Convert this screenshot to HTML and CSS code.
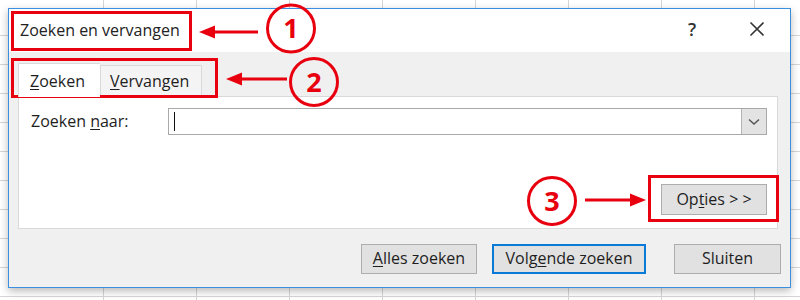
FILE: index.html
```html
<!DOCTYPE html>
<html lang="nl">
<head>
<meta charset="utf-8">
<title>Zoeken en vervangen</title>
<link rel="stylesheet" href="styles.css">
</head>
<body>
<div class="dialog">
  <div class="titlebar">
    <span class="title">Zoeken en vervangen</span>
    <span class="help">?</span>
    <span class="close">
      <svg width="16" height="16" viewBox="0 0 16 16"><path d="M1.5 1.5 L14.5 14.5 M14.5 1.5 L1.5 14.5" stroke="#333" stroke-width="1.6" fill="none"/></svg>
    </span>
  </div>
  <div class="tabs">
    <div class="tab active"><u>Z</u>oeken</div>
    <div class="tab"><u>V</u>ervangen</div>
  </div>
  <div class="panel">
    <div class="field-row">
      <label class="label">Zoeken <u>n</u>aar:</label>
      <div class="combo">
        <div class="combo-input"><span class="caret"></span></div>
        <div class="combo-btn">
          <svg width="12" height="8" viewBox="0 0 12 8"><path d="M1 1.5 L6 6 L11 1.5" stroke="#555" stroke-width="1.5" fill="none"/></svg>
        </div>
      </div>
    </div>
    <div class="options-row">
      <button class="btn options">Op<u>t</u>ies &gt; &gt;</button>
    </div>
  </div>
  <div class="footer">
    <button class="btn b-all"><u>A</u>lles zoeken</button>
    <button class="btn b-next default">Volg<u>e</u>nde zoeken</button>
    <button class="btn b-close">Sluiten</button>
  </div>
</div>

<svg class="annotations" width="800" height="300" viewBox="0 0 800 300">
  <g fill="none" stroke="#e8000e" stroke-width="3">
    <rect x="12.5" y="12.5" width="178" height="37"/>
    <rect x="12.5" y="59.5" width="204" height="37"/>
    <rect x="649.5" y="176.5" width="128" height="44"/>
    <circle cx="291" cy="28.5" r="23.5"/>
    <circle cx="314" cy="82" r="23.5"/>
    <circle cx="552" cy="201" r="23.5"/>
    <line x1="258" y1="32" x2="212" y2="32"/>
    <line x1="287" y1="79" x2="239" y2="79"/>
    <line x1="585" y1="200" x2="633" y2="200"/>
  </g>
  <g fill="#e8000e">
    <polygon points="199,32 215,25.5 215,38.5"/>
    <polygon points="226,79 242,72.5 242,85.5"/>
    <polygon points="646,200 630,193.5 630,206.5"/>
  </g>
  <g class="num" fill="#e8000e">
    <text x="291" y="38" text-anchor="middle">1</text>
    <text x="314" y="91.5" text-anchor="middle">2</text>
    <text x="552" y="210.5" text-anchor="middle">3</text>
  </g>
</svg>
</body>
</html>
```

FILE: styles.css
```css
* { box-sizing: border-box; }

html, body {
  margin: 0;
  padding: 0;
}

body {
  width: 800px;
  height: 300px;
  overflow: hidden;
  position: relative;
  font-family: "Open Sans", "Noto Sans", sans-serif;
  font-size: 16px;
  color: #1e1e1e;
  background-color: #ffffff;
  background-image:
    repeating-linear-gradient(to right, transparent 0, transparent 92px, #d6d6d6 92px, #d6d6d6 93px),
    repeating-linear-gradient(to bottom, transparent 0, transparent 28px, #d6d6d6 28px, #d6d6d6 29px);
  background-position: 11px 0, 0 7px;
}

.dialog {
  margin: 8px 0 0 8px;
  width: 783px;
  height: 280px;
  border: 1px solid #3b8ee0;
  background: #f0f0f0;
  box-shadow: 0 3px 8px rgba(0, 0, 0, 0.28);
  display: flex;
  flex-direction: column;
}

.titlebar {
  height: 43px;
  background: #ffffff;
  display: flex;
  align-items: center;
  padding-left: 11px;
  flex: none;
}

.title {
  flex: 1;
  font-size: 16px;
  color: #222;
  padding-bottom: 2px;
}

.help {
  font-size: 18px;
  font-weight: 600;
  color: #333;
  width: 20px;
  text-align: center;
  margin-right: 47px;
  padding-bottom: 4px;
}

.close {
  display: flex;
  width: 16px;
  height: 16px;
  margin-right: 25px;
  margin-bottom: 4px;
}

.tabs {
  display: flex;
  align-items: flex-end;
  padding: 11px 0 0 9px;
  height: 44px;
  flex: none;
  position: relative;
  z-index: 1;
}

.tab {
  height: 30px;
  padding: 0 10px 0 9px;
  width: 102px;
  display: flex;
  align-items: center;
  background: #f4f4f4;
  border: 1px solid #d9d9d9;
  border-bottom: none;
  margin-bottom: 1px;
  font-size: 16px;
}

.tab.active {
  width: 82px;
  height: 34px;
  background: #ffffff;
  padding-left: 11px;
  margin-bottom: -1px;
  border-right: none;
  padding-top: 1px;
}

u {
  text-decoration: underline;
  text-underline-offset: 2px;
  text-decoration-thickness: 1px;
}

.panel {
  margin: 0 12px 0 9px;
  height: 133px;
  background: #ffffff;
  border: 1px solid #d9d9d9;
  display: flex;
  flex-direction: column;
  padding: 11px 10px 13px 12px;
  flex: none;
}

.field-row {
  display: flex;
  align-items: center;
  height: 27px;
}

.label {
  width: 137px;
  font-size: 16px;
  padding-bottom: 1px;
}

.combo {
  flex: 1;
  display: flex;
  height: 27px;
  border: 1px solid #a9a9a9;
}

.combo-input {
  flex: 1;
  background: #fff;
  display: flex;
  align-items: center;
  padding-left: 5px;
}

.caret {
  width: 1px;
  height: 19px;
  background: #111;
}

.combo-btn {
  width: 25px;
  background: #e3e3e3;
  border-left: 1px solid #b5b5b5;
  display: flex;
  align-items: center;
  justify-content: center;
}

.options-row {
  margin-top: auto;
  display: flex;
  justify-content: flex-end;
}

.btn {
  font-family: "Open Sans", "Noto Sans", sans-serif;
  font-size: 16px;
  color: #1e1e1e;
  background: #e1e1e1;
  border: 1px solid #adadad;
  height: 30px;
  padding: 0 0 2px 0;
  margin: 0;
  display: flex;
  align-items: center;
  justify-content: center;
  white-space: nowrap;
}

.options {
  width: 106px;
  height: 31px;
}

.footer {
  display: flex;
  justify-content: flex-end;
  align-items: flex-start;
  padding: 15px 9px 0 0;
  flex: 1;
}

.b-all { width: 116px; }

.b-next {
  width: 154px;
  margin-left: 15px;
}

.default {
  border: 2px solid #0a7ad8;
}

.b-close {
  width: 107px;
  margin-left: 28px;
}

.annotations {
  position: absolute;
  left: 0;
  top: 0;
  pointer-events: none;
}

.num text {
  font-family: "Open Sans", "Liberation Sans", sans-serif;
  font-weight: 700;
  font-size: 27px;
}
```
